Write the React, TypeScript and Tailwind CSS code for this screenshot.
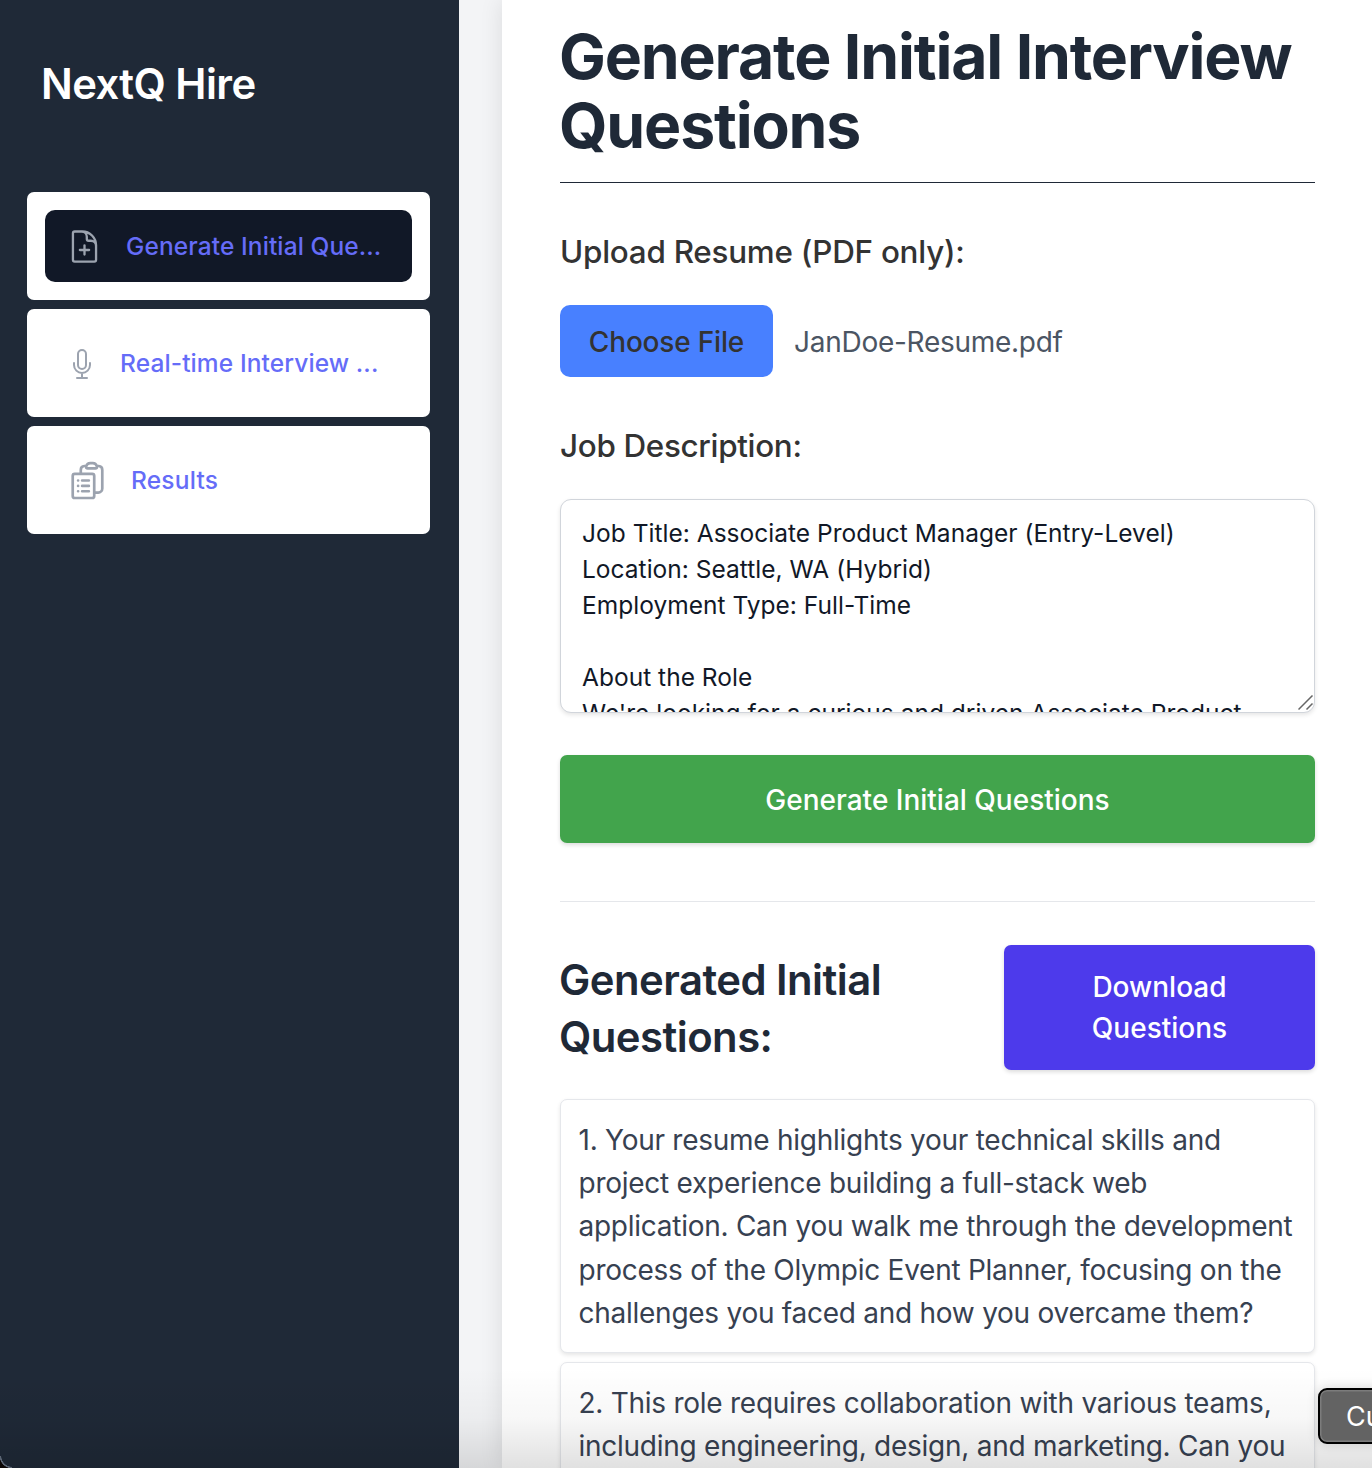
import type { ReactNode } from 'react';

const jobDescription = `Job Title: Associate Product Manager (Entry-Level)
Location: Seattle, WA (Hybrid)
Employment Type: Full-Time

About the Role
We're looking for a curious and driven Associate Product`;

const questions: string[][] = [
  [
    '1. Your resume highlights your technical skills and',
    'project experience building a full-stack web',
    'application. Can you walk me through the development',
    'process of the Olympic Event Planner, focusing on the',
    'challenges you faced and how you overcame them?',
  ],
  [
    '2. This role requires collaboration with various teams,',
    'including engineering, design, and marketing. Can you',
  ],
];

function Icon({ d, className }: { d: string; className: string }) {
  return (
    <svg
      viewBox="0 0 24 24"
      fill="none"
      stroke="currentColor"
      strokeWidth={1.5}
      strokeLinecap="round"
      strokeLinejoin="round"
      className={`shrink-0 text-[#9ca3af] ${className}`}
    >
      <path d={d} />
    </svg>
  );
}

const documentPlus =
  'M19.5 14.25v-2.625a3.375 3.375 0 0 0-3.375-3.375h-1.5A1.125 1.125 0 0 1 13.5 7.125v-1.5a3.375 3.375 0 0 0-3.375-3.375H8.25m3.75 9v6m3-3H9m1.5-12H5.625c-.621 0-1.125.504-1.125 1.125v17.25c0 .621.504 1.125 1.125 1.125h12.75c.621 0 1.125-.504 1.125-1.125V11.25a9 9 0 0 0-9-9Z';
const microphone =
  'M12 18.75a6 6 0 0 0 6-6v-1.5m-6 7.5a6 6 0 0 1-6-6v-1.5m6 7.5v3.75m-3.75 0h7.5M12 15.75a3 3 0 0 1-3-3V4.5a3 3 0 1 1 6 0v8.25a3 3 0 0 1-3 3Z';
const clipboardList =
  'M9 12h3.75M9 15h3.75M9 18h3.75m3 .75H18a2.25 2.25 0 0 0 2.25-2.25V6.108c0-1.135-.845-2.098-1.976-2.192a48.424 48.424 0 0 0-1.123-.08m-5.801 0c-.065.21-.1.433-.1.664 0 .414.336.75.75.75h4.5a.75.75 0 0 0 .75-.75 2.25 2.25 0 0 0-.1-.664m-5.8 0A2.251 2.251 0 0 1 13.5 2.25H15c1.012 0 1.867.668 2.15 1.586m-5.8 0c-.376.023-.75.05-1.124.08C9.095 4.01 8.25 4.973 8.25 6.108V8.25m0 0H4.875c-.621 0-1.125.504-1.125 1.125v11.25c0 .621.504 1.125 1.125 1.125h9.75c.621 0 1.125-.504 1.125-1.125V9.375c0-.621-.504-1.125-1.125-1.125H8.25ZM6.75 12h.008v.008H6.75V12Zm0 3h.008v.008H6.75V15Zm0 3h.008v.008H6.75V18Z';

function NavItem({ icon, active, gap, children }: { icon: ReactNode; active?: boolean; gap: string; children: ReactNode }) {
  return (
    <li className="rounded-[7px] bg-white p-[18px]">
      <a
        className={`flex h-[72px] items-center rounded-[10px] pl-[21px] text-[24.5px] font-medium whitespace-nowrap text-[#656cf8] ${gap} ${
          active ? 'bg-[#111827]' : ''
        }`}
      >
        {icon}
        {children}
      </a>
    </li>
  );
}

export default function App() {
  return (
    <div className="relative flex h-[1468px] w-full overflow-hidden bg-[#f3f4f6] font-[Inter,sans-serif]">
      <aside className="w-[459px] shrink-0 bg-[#1f2937] px-[27px]">
        <div className="mt-[54px] pl-[14px] text-[41.8px] leading-[60px] font-semibold tracking-[-0.55px] text-white">
          NextQ Hire
        </div>
        <ul className="mt-[78px] flex w-[403px] flex-col gap-[9px]">
          <NavItem active gap="gap-[23px]" icon={<Icon d={documentPlus} className="size-[37px]" />}>
            <span className="tracking-[0.1px]">Generate Initial Que...</span>
          </NavItem>
          <NavItem gap="gap-[22px]" icon={<Icon d={microphone} className="mt-px size-[32px]" />}>
            <span className="tracking-[0.11px]">Real-time Interview ...</span>
          </NavItem>
          <NavItem gap="gap-[22px]" icon={<Icon d={clipboardList} className="size-[43px]" />}>
            <span className="tracking-[0.2px]">Results</span>
          </NavItem>
        </ul>
      </aside>

      <main className="ml-[43px] flex w-[870px] shrink-0 flex-col bg-white pt-[22px] pr-[57px] pl-[58px] shadow-[0_0_22px_rgba(0,0,0,0.1)]">
        <h1 className="shrink-0 border-b border-[#1f2937] pb-[22px] text-[62.5px] leading-[69px] font-bold tracking-[-1.18px] whitespace-nowrap text-[#1f2937]">
          <span className="-ml-px">Generate Initial Interview</span>
          <br />
          <span className="-ml-px">Questions</span>
        </h1>

        <label className="mt-[44px] text-[31.4px] leading-[50px] font-medium tracking-[-0.25px] text-[#333333]">
          Upload Resume (PDF only):
        </label>
        <div className="mt-[28px] flex h-[72px] shrink-0 items-center gap-[21px]">
          <button className="h-[72px] w-[213px] rounded-[10px] bg-[#4880ff] pt-[2px] text-[28px] font-medium tracking-[-0.18px] text-[#333333]">
            Choose File
          </button>
          <span className="pt-[2px] text-[28px] tracking-[-0.27px] text-[#4b5563]">JanDoe-Resume.pdf</span>
        </div>

        <label className="mt-[44px] text-[31.4px] leading-[50px] font-medium tracking-[-0.32px] text-[#333333]">
          Job Description:
        </label>
        <div className="relative mt-[28px] h-[214px] shrink-0">
          <textarea
            readOnly
            value={jobDescription}
            className="block h-full w-full resize-none overflow-hidden rounded-[11px] border border-[#d1d5db] bg-white px-[21px] pt-[15px] text-[24.5px] leading-[36px] tracking-[0.02px] text-[#111827] shadow-[0_2px_4px_rgba(0,0,0,0.1)]"
          />
          <svg viewBox="0 0 16 16" className="absolute right-px bottom-[2px] size-4" stroke="#666666" strokeWidth="1.5" fill="none">
            <path d="M0.5 14.5 14.5 0.5M8.5 14.5 14.5 8.5" />
          </svg>
        </div>

        <button className="mt-[42px] h-[88px] shrink-0 rounded-[7px] bg-[#42a44c] pt-[2px] text-[28px] font-medium text-white shadow-[0_2px_4px_rgba(0,0,0,0.14)]">
          Generate Initial Questions
        </button>

        <div className="mt-[58px] flex shrink-0 items-center justify-between border-t border-[#e5e7eb] pt-[43px]">
          <h2 className="-ml-px pt-[2px] text-[41.8px] leading-[57px] font-semibold tracking-[-0.52px] text-[#1f2937]">
            Generated Initial
            <br />
            Questions:
          </h2>
          <button className="h-[125px] w-[311px] rounded-[7px] bg-[#4d3aeb] text-[28px] leading-[41px] font-medium text-white shadow-[0_2px_4px_rgba(0,0,0,0.14)]">
            Download
            <br />
            Questions
          </button>
        </div>

        <ol className="mt-[29px] flex flex-col gap-[9px]">
          {questions.map((lines) => (
            <li
              key={lines[0]}
              className="rounded-[7px] border border-[#e5e7eb] bg-white px-[17.5px] pt-[19px] pb-[17px] text-[28px] leading-[43.2px] tracking-[-0.26px] whitespace-pre text-[#374151] shadow-[0_2px_4px_rgba(0,0,0,0.1)]"
            >
              {lines.join('\n')}
            </li>
          ))}
        </ol>
      </main>

      <div className="pointer-events-none absolute inset-x-0 bottom-0 h-[100px] bg-linear-to-b from-black/0 via-black/3 to-black/12" />
      <div className="absolute top-[1388px] left-[1318px] h-[56px] w-[120px] rounded-[9px] border-2 border-black bg-[#636363] pl-[26px] text-[27px] leading-[53px] text-white shadow-[inset_0_0_0_1.5px_#7c7c7c,0_0_12px_rgba(0,0,0,0.15)]">
        Cu
      </div>
      <div className="absolute bottom-0 left-0 size-[12px] bg-[radial-gradient(circle_at_100%_0%,transparent_10.5px,#5b6574_11px,#5b6574_12px,#0b0604_12.5px)]" />
    </div>
  );
}
